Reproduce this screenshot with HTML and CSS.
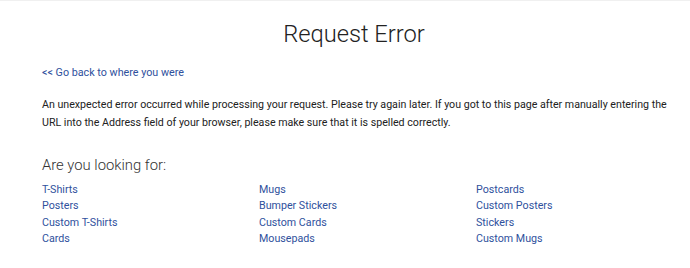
FILE: index.html
```
<!DOCTYPE html>
<html lang="en">
<head>
<meta charset="utf-8">
<title>Request Error</title>
<link rel="stylesheet" href="styles.css">
</head>
<body>
<div class="topline"></div>
<main class="page">
  <h1 class="title">Request Error</h1>
  <a class="back" href="#">&lt;&lt; Go back to where you were</a>
  <p class="msg">An unexpected error occurred while processing your request. Please try again later. If you got to this page after manually entering the URL into the Address field of your browser, please make sure that it is spelled correctly.</p>
  <h2 class="looking">Are you looking for:</h2>
  <div class="links">
    <ul class="col">
      <li><a href="#">T-Shirts</a></li>
      <li><a href="#">Posters</a></li>
      <li><a href="#">Custom T-Shirts</a></li>
      <li><a href="#">Cards</a></li>
    </ul>
    <ul class="col">
      <li><a href="#">Mugs</a></li>
      <li><a href="#">Bumper Stickers</a></li>
      <li><a href="#">Custom Cards</a></li>
      <li><a href="#">Mousepads</a></li>
    </ul>
    <ul class="col">
      <li><a href="#">Postcards</a></li>
      <li><a href="#">Custom Posters</a></li>
      <li><a href="#">Stickers</a></li>
      <li><a href="#">Custom Mugs</a></li>
    </ul>
  </div>
</main>
</body>
</html>
```

FILE: styles.css
```
html, body {
  margin: 0;
  padding: 0;
  background: #fff;
}
body {
  font-family: Roboto, "Liberation Sans", sans-serif;
  color: #222;
}
.topline {
  height: 1px;
  background: #f0f0f0;
}
.page {
  padding: 0 0 0 42px;
}
.title {
  margin: 18px 0 0 -42px;
  padding-left: 18px;
  text-align: center;
  font-size: 23.7px;
  font-weight: 300;
  line-height: 30px;
  color: #222;
}
a {
  color: #2f519d;
  text-decoration: none;
}
.back {
  display: block;
  margin-top: 17px;
  font-size: 10.75px;
  line-height: 14px;
}
.msg {
  margin: 16px 0 0 0;
  font-size: 10.65px;
  line-height: 18px;
  padding-right: 10px;
}
.looking {
  margin: 23px 0 0 0;
  font-size: 14.8px;
  font-weight: 300;
  line-height: 20px;
  color: #333;
}
.links {
  display: grid;
  grid-template-columns: repeat(3, 217px);
  margin-top: 7px;
}
.col {
  list-style: none;
  margin: 0;
  padding: 0;
}
.col li {
  font-size: 10.7px;
  line-height: 16.33px;
}
```
